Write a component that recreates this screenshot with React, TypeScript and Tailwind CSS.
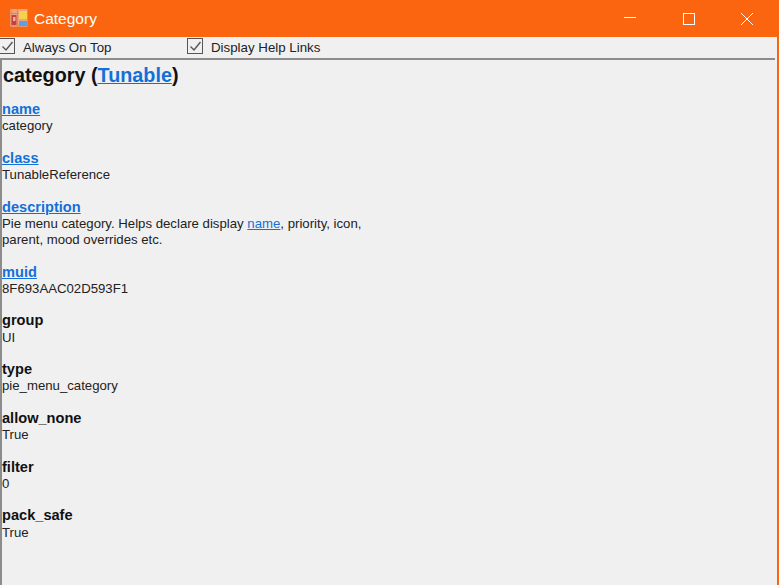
const font = { fontFamily: '"Liberation Sans", Arial, sans-serif' };

const link = "text-[#1470d8] underline";

function Check({ label, className, boxClass }: { label: string; className?: string; boxClass?: string }) {
  return (
    <label className={`flex items-center ${className ?? ""}`}>
      <span className={`w-[16px] h-[16px] mb-[3px] border-[1.5px] border-[#555555] flex items-center justify-center shrink-0 ${boxClass ?? ""}`}>
        <svg width="13" height="13" viewBox="0 0 13 13" fill="none">
          <path d="M1.5 6.5L5 10L11.5 2" stroke="#555555" strokeWidth="1.4" />
        </svg>
      </span>
      <span className="text-[13.3px] text-[#222222]">{label}</span>
    </label>
  );
}

function Field({
  name,
  linked,
  children,
}: {
  name: string;
  linked?: boolean;
  children: React.ReactNode;
}) {
  return (
    <div className="mb-[16.25px] text-[13.2px] leading-[16.25px] text-[#222222]">
      <div className={`font-bold text-[14.6px] leading-[15.25px] mb-[1px] ${linked ? link : "text-[#111111]"}`}>
        {name}
      </div>
      <div className="w-[372px]">{children}</div>
    </div>
  );
}

export default function App() {
  return (
    <div
      className="w-[779px] h-[585px] flex flex-col bg-[#f0f0f0] overflow-hidden border-r-2 border-[#fb6510]"
      style={font}
    >
      <div className="h-[37px] shrink-0 bg-[#fb6510] flex items-center text-white">
        <svg className="ml-[10px] mb-[2px]" width="18" height="18" viewBox="0 0 18 18">
          <rect x="0" y="0" width="18" height="18" fill="#eca47e" />
          <path d="M0 4.5H18M0 17H18M1 0V18M7.5 0V18M17.5 0V18" stroke="#d9825a" strokeWidth="0.8" />
          <rect x="1.5" y="6" width="5" height="10" fill="#c9403a" />
          <rect x="3" y="8" width="2.5" height="4" fill="#eeb0a0" />
          <rect x="9" y="2" width="8" height="8" fill="#f5d04a" />
          <rect x="9" y="12" width="8" height="5" fill="#5f9fe0" />
        </svg>
        <span className="ml-[6px] text-[15.5px]">Category</span>
        <div className="ml-auto flex items-center pr-[0.5px]">
          <div className="w-[58.5px] flex justify-center mb-[2px]">
            <div className="w-3 h-px bg-white" />
          </div>
          <div className="w-[58.5px] flex justify-center">
            <div className="w-3 h-3 border border-white" />
          </div>
          <div className="w-[58.5px] flex justify-center">
            <svg width="12" height="12" viewBox="0 0 12 12" stroke="white" strokeWidth="1">
              <path d="M0 0L12 12M12 0L0 12" />
            </svg>
          </div>
        </div>
      </div>

      <div className="h-[21px] shrink-0 flex items-center">
        <Check label="Always On Top" className="w-[187px]" boxClass="-ml-px mr-[8px]" />
        <Check label="Display Help Links" boxClass="mr-[8px]" />
      </div>

      <div className="flex-1 flex flex-col">
        <div className="h-[2px] shrink-0 w-[775px] bg-[#8c8c8c]" />
        <div className="flex-1 border-l-2 border-[#8c8c8c] pt-[4px]">
          <h1 className="ml-[1px] font-bold text-[19.8px] leading-[22px] text-[#111111] mb-[16px]">
            category (<span className={link}>Tunable</span>)
          </h1>
          <Field name="name" linked>category</Field>
          <Field name="class" linked>TunableReference</Field>
          <Field name="description" linked>
            Pie menu category. Helps declare display <span className={link}>name</span>, priority, icon, parent, mood overrides etc.
          </Field>
          <Field name="muid" linked>8F693AAC02D593F1</Field>
          <Field name="group">UI</Field>
          <Field name="type">pie_menu_category</Field>
          <Field name="allow_none">True</Field>
          <Field name="filter">0</Field>
          <Field name="pack_safe">True</Field>
        </div>
      </div>
    </div>
  );
}
